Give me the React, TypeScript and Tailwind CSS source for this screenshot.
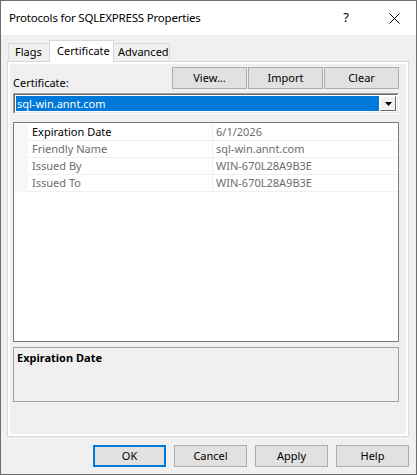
import React from "react";

const font = { fontFamily: '"Noto Sans", "Open Sans", sans-serif' };

function Btn({ children, w, primary }: { children: React.ReactNode; w: string; primary?: boolean }) {
  return (
    <div
      className={`${w} h-[22px] flex items-center justify-center bg-[#e1e1e1] text-[11px] text-black ${
        primary ? "border-2 border-[#0078d7]" : "border border-[#adadad]"
      }`}
    >
      {children}
    </div>
  );
}

const rows = [
  { k: "Expiration Date", v: "6/1/2026", first: true },
  { k: "Friendly Name", v: "sql-win.annt.com" },
  { k: "Issued By", v: "WIN-670L28A9B3E" },
  { k: "Issued To", v: "WIN-670L28A9B3E" },
];

export default function App() {
  return (
    <div
      style={font}
      className="w-[417px] h-[475px] border border-[#6e6e6e] bg-[#f0f0f0] flex flex-col text-[11px] text-black overflow-hidden"
    >
      {/* Title bar */}
      <div className="h-[34px] bg-white flex items-center pl-[8px] shrink-0">
        <div className="flex-1 text-[11.5px] tracking-[-0.2px] text-black">Protocols for SQLEXPRESS Properties</div>
        <div className="w-[20px] text-center text-[13px] mr-[28px]">?</div>
        <div className="w-[20px] flex items-center justify-center mr-[12px]">
          <svg width="11" height="11" viewBox="0 0 11 11">
            <path d="M0.5 0.5 L10.5 10.5 M10.5 0.5 L0.5 10.5" stroke="#000" strokeWidth="1" />
          </svg>
        </div>
      </div>

      {/* Body */}
      <div className="flex-1 flex flex-col px-[6px] pt-[5px]">
        {/* Tabs */}
        <div className="flex items-end h-[21px] pl-[1px] relative z-10">
          <div className="w-[42px] h-[18px] border-t border-l border-[#d9d9d9] bg-[#f0f0f0] pl-[6px] flex items-center">
            Flags
          </div>
          <div className="w-[65px] h-[22px] -mb-px border-t border-l border-r border-[#d9d9d9] bg-white pl-[7px] flex items-start pt-[2px] -ml-[1px]">
            Certificate
          </div>
          <div className="w-[56px] h-[18px] border-t border-r border-[#d9d9d9] bg-[#f0f0f0] pl-[4px] flex items-center">
            Advanced
          </div>
        </div>

        {/* Panel */}
        <div className="w-[402px] h-[376px] border border-[#d9d9d9] bg-white p-[2px] flex">
          <div className="flex-1 bg-[#f0f0f0] flex flex-col pl-[3px] pr-[7px] pt-[3px]">
            <div className="flex items-end h-[22px]">
              <div className="flex-1 leading-none pb-[1px]">Certificate:</div>
              <div className="flex gap-[1px]">
                <Btn w="w-[75px]">View...</Btn>
                <Btn w="w-[75px]">Import</Btn>
                <Btn w="w-[75px]">Clear</Btn>
              </div>
            </div>

            {/* Combo */}
            <div className="mt-[4px] h-[21px] border-t border-l border-[#a0a0a0] border-b border-r border-b-white border-r-white flex">
              <div className="flex-1 border-t border-l border-[#696969] border-b border-r border-b-[#e3e3e3] border-r-[#e3e3e3] bg-white flex p-[1px]">
                <div className="flex-1 bg-[#0078d7] text-white flex items-center pl-[1px] leading-none">
                  sql-win.annt.com
                </div>
                <div className="w-[16px] ml-[1px] bg-[#f0f0f0] border-t border-l border-white border-b border-r border-b-[#696969] border-r-[#696969] flex items-center justify-center">
                  <svg width="7" height="4" viewBox="0 0 7 4">
                    <path d="M0 0 H7 L3.5 4 Z" fill="#000" />
                  </svg>
                </div>
              </div>
            </div>

            {/* Property grid */}
            <div className="mt-[8px] h-[220px] border border-[#7a7a7a] bg-white flex flex-col">
              <div className="flex flex-col pt-[1px]">
                {rows.map((r) => (
                  <div key={r.k} className="flex h-[17px]">
                    <div className="w-[14px] bg-[#f7f7f7]" />
                    <div
                      className={`w-[184px] border-b border-[#f0f0f0] flex items-center pl-[4px] ${
                        r.first ? "text-black" : "text-[#6d6d6d]"
                      }`}
                    >
                      {r.k}
                    </div>
                    <div className="flex-1 border-b border-l border-[#f0f0f0] flex items-center pl-[3px] text-[#6d6d6d]">
                      {r.v}
                    </div>
                  </div>
                ))}
              </div>
            </div>

            {/* Description */}
            <div className="mt-[5px] h-[55px] border border-[#a0a0a0] bg-[#f0f0f0] px-[3px] pt-[2px]">
              <div className="font-bold">Expiration Date</div>
            </div>
          </div>
        </div>

        {/* Bottom buttons */}
        <div className="flex justify-end gap-[8px] mt-[8px] pr-[1px]">
          <Btn w="w-[73px]" primary>
            OK
          </Btn>
          <Btn w="w-[73px]">Cancel</Btn>
          <Btn w="w-[73px]">Apply</Btn>
          <Btn w="w-[73px]">Help</Btn>
        </div>
      </div>
    </div>
  );
}
